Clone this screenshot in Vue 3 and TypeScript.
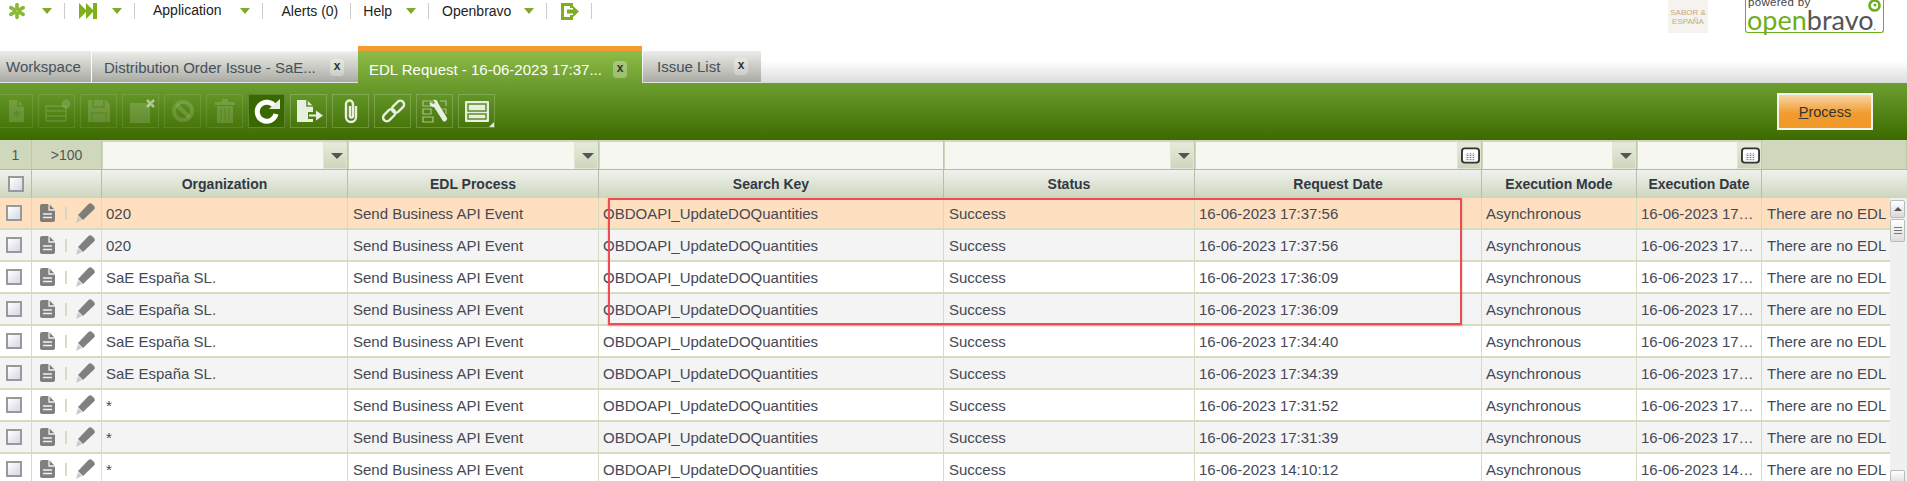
<script setup lang="ts">
interface Row { org: string; time: string; exec: string; }
const rows: Row[] = [
  { org: '020', time: '17:37:56', exec: '17' },
  { org: '020', time: '17:37:56', exec: '17' },
  { org: 'SaE España SL.', time: '17:36:09', exec: '17' },
  { org: 'SaE España SL.', time: '17:36:09', exec: '17' },
  { org: 'SaE España SL.', time: '17:34:40', exec: '17' },
  { org: 'SaE España SL.', time: '17:34:39', exec: '17' },
  { org: '*', time: '17:31:52', exec: '17' },
  { org: '*', time: '17:31:39', exec: '17' },
  { org: '*', time: '14:10:12', exec: '14' },
];
const headers = ['Organization', 'EDL Process', 'Search Key', 'Status', 'Request Date', 'Execution Mode', 'Execution Date', ''];
const filters = ['drop', 'drop', '', 'drop', 'cal', 'drop', 'cal'];
const tools = ['new', 'grid', 'save', 'del', 'stop', 'trash', 'refresh', 'export', 'clip', 'link', 'tools', 'view'];
const disabled = ['new', 'grid', 'save', 'del', 'stop', 'trash'];
</script>

<template>
  <div class="page">
    <header class="menu">
      <div class="seg s1">
        <svg width="18" height="18" viewBox="0 0 18 18"><g stroke="#8ab838" stroke-width="3.600" stroke-linecap="round"><path d="M9 2.500V7" /><path d="M9 11v4.500" /><path d="M2.800 5.600 6.800 7.800" /><path d="M11.200 10.200 15.200 12.400" /><path d="M2.800 12.400 6.800 10.200" /><path d="M11.200 7.800 15.200 5.600" /></g></svg>
        <i class="arrow"></i>
      </div>
      <div class="seg s2">
        <svg width="18" height="16" viewBox="0 0 18 16"><path fill="#7fb01c" d="M0 0 7 7V0l7 7V0h4v16h-4V9l-7 7V9l-7 7z" /></svg>
        <i class="arrow"></i>
      </div>
      <div class="seg s3"><span>Application</span><i class="arrow"></i></div>
      <div class="seg s4"><span>Alerts (0)</span></div>
      <div class="seg s5"><span>Help</span><i class="arrow"></i></div>
      <div class="seg s6"><span>Openbravo</span><i class="arrow"></i></div>
      <div class="seg s7">
        <svg width="18" height="17" viewBox="0 0 18 17"><path fill="#7fb01c" d="M0 0h12v5H9V3H3v11h6v-2h3v5H0z" /><path fill="#7fb01c" d="M6 6.500h6V3l6 5.500-6 5.500v-3.500H6z" /></svg>
      </div>
      <div class="logos">
        <div class="sabor"><span>SABOR &amp;</span><span>ESPAÑA</span></div>
        <div class="obox">
          <span class="powered">powered by</span>
          <span class="oname"><b>open</b>bravo<small>.</small></span>
          <svg class="swirl" width="13" height="13" viewBox="0 0 13 13"><circle cx="6.500" cy="6.500" r="5" fill="none" stroke="#6cae1c" stroke-width="2.600" /><circle cx="7" cy="6" r="1.500" fill="#6cae1c" /></svg>
        </div>
      </div>
    </header>

    <nav class="tabs">
      <div class="tab t-work">Workspace</div>
      <div class="tab t-dist"><span class="tlabel">Distribution Order Issue - SaE...</span><i class="close">x</i></div>
      <div class="tab t-edl"><span class="tlabel">EDL Request - 16-06-2023 17:37...</span><i class="close">x</i></div>
      <div class="tab t-issue"><span class="tlabel">Issue List</span><i class="close">x</i></div>
    </nav>

    <div class="bar">
      <div class="tools">
        <button v-for="t in tools" :key="t" class="tool" :class="[`tool-${t}`, { off: disabled.includes(t) }]">
          <svg width="30" height="28" viewBox="0 0 30 28">
            <template v-if="t === 'new'"><path d="M8 3h9l6 6v16H8z" /><path class="cut" d="M17 3v6h6" /><path class="cut" d="M15.500 13v7M12.500 15l6 3M18.500 15l-6 3" /></template>
            <template v-else-if="t === 'grid'"><path class="line" d="M4 9h18a2 2 0 0 1 2 2v11a2 2 0 0 1-2 2H6a2 2 0 0 1-2-2zM4 14h20M4 19h20" /><circle cx="24" cy="7" r="4.500" /></template>
            <template v-else-if="t === 'save'"><path d="M4 3h18l4 4v18H4z" /><path class="cut" d="M9 3v7h11V3M8 25v-9h14v9" /></template>
            <template v-else-if="t === 'del'"><rect x="4" y="6" width="20" height="20" /><path class="thick" d="M21 3l7 7M28 3l-7 7" /></template>
            <template v-else-if="t === 'stop'"><circle class="ring" cx="15" cy="14" r="9" /><path class="ring" d="M9 8l12 12" /></template>
            <template v-else-if="t === 'trash'"><path d="M5 5h20v3H5zM12 2h6v3h-6zM7 9h16v17H7z" /><path class="cut" d="M11 11v13M15 11v13M19 11v13" /></template>
            <template v-else-if="t === 'refresh'"><path class="ring heavy" d="M23 10a9.500 9.500 0 1 0 1 7" /><path d="M17 12h11V2z" /></template>
            <template v-else-if="t === 'export'"><path d="M3 3h10l6 6v6h-5v7h5v3H3z" /><path class="cut" d="M13 3v6h6" /><path d="M15 17.500h7v-4l7 5-7 5v-4h-7z" /></template>
            <template v-else-if="t === 'clip'"><path class="line bold" d="M20 9v11a5 5 0 0 1-10 0V7a3.500 3.500 0 0 1 7 0v12a1.500 1.500 0 0 1-3 0V9" /></template>
            <template v-else-if="t === 'link'"><rect class="line bold" x="4" y="14.500" width="14" height="7.500" rx="3.700" transform="rotate(-45 11 18)" /><rect class="line bold" x="13" y="6" width="14" height="7.500" rx="3.700" transform="rotate(-45 20 9.700)" /></template>
            <template v-else-if="t === 'tools'"><path class="line dim" d="M3 4h9v5H3zM3 12h8v5H3zM3 20h10v5H3zM20 4h6v5M22 12h4v5" /><path d="M13 3c2-1 5 0 5 3l9 15c1 2-3 5-4 3L14 10c-3 0-5-2-4-5l3 2 2-1z" /></template>
            <template v-else><rect x="3" y="4" width="24" height="21" rx="1" /><path class="cut" d="M6 7h18v7H6zM6 17h18v5H6z" /></template>
          </svg>
          <i v-if="t === 'view'" class="corner"></i>
        </button>
      </div>
      <button class="process"><u>P</u>rocess</button>
    </div>

    <div class="grid filter">
      <div class="fcell count">1</div>
      <div class="fcell count">&gt;100</div>
      <div v-for="(f, i) in filters" :key="i" class="fcell field">
        <div class="input"></div>
        <div v-if="f" class="fbtn">
          <i v-if="f === 'drop'" class="darrow"></i>
          <svg v-else width="20" height="17" viewBox="0 0 20 17"><rect x="1" y="1" width="18" height="15" rx="3" fill="#fff" stroke="#333" stroke-width="2" /><path d="M5 8h10M5 10.500h10M5 13h10M7 6v8M10 6v8M13 6v8" stroke="#777" stroke-dasharray="1 1" fill="none" /></svg>
        </div>
      </div>
      <div class="fcell"></div>
    </div>

    <div class="grid head">
      <div class="hcell"><span class="check"></span></div>
      <div class="hcell"></div>
      <div v-for="h in headers" :key="h" class="hcell">{{ h }}</div>
    </div>

    <div class="body">
      <div class="rows">
        <div v-for="(r, i) in rows" :key="i" class="grid row" :class="{ sel: i === 0, alt: i % 2 === 1 }">
          <div class="cell"><span class="check"></span></div>
          <div class="cell actions">
            <svg width="17" height="18" viewBox="0 0 17 18"><path fill="#6b6b6b" d="M1 2a2 2 0 0 1 2-2h7l6 6v10a2 2 0 0 1-2 2H3a2 2 0 0 1-2-2z" /><path stroke="#eee" stroke-width="1.300" fill="none" d="M10 0v6h6M4 10h9M4 13.500h9" /></svg>
            <i class="sep"></i>
            <svg width="20" height="20" viewBox="0 0 20 20"><path fill="#6b6b6b" d="M13.500 1c1-1 2.500-1 3.500 0l2 2c1 1 1 2.500 0 3.500L8 17 3 12z" /><path fill="#c4c4c4" d="M3 13l4 4-6 3z" /></svg>
          </div>
          <div class="cell">{{ r.org }}</div>
          <div class="cell wide">Send Business API Event</div>
          <div class="cell">OBDOAPI_UpdateDOQuantities</div>
          <div class="cell wide">Success</div>
          <div class="cell">16-06-2023 {{ r.time }}</div>
          <div class="cell">Asynchronous</div>
          <div class="cell">16-06-2023 {{ r.exec }}…</div>
          <div class="cell wide">There are no EDL</div>
        </div>
        <div class="highlight"></div>
      </div>
      <div class="scroll">
        <div class="sbtn up"><i></i></div>
        <div class="thumb"><i></i><i></i><i></i></div>
        <div class="sbtn down"></div>
      </div>
    </div>
  </div>
</template>

<style scoped>
.page { width: 1907px; height: 481px; overflow: hidden; background: #fff; font-family: "Liberation Sans", Arial, sans-serif; font-size: 15px; color: #444955; }
.menu { height: 46px; display: flex; align-items: flex-start; color: #222; font-size: 14px; }
.seg { height: 16px; margin-top: 3px; display: flex; align-items: center; border-right: 1px solid #ccc; padding-right: 12px; box-sizing: content-box; }
.s1 { padding-left: 8px; gap: 16px; width: 44px; }
.s2 { padding-left: 14px; gap: 15px; }
.s3 { padding-left: 18px; gap: 18px; }
.s3 span { position: relative; top: -1px; }
.s4 { padding-left: 19px; }
.s5 { padding-left: 12px; gap: 14px; }
.s6 { padding-left: 13px; gap: 13px; }
.s7 { padding-left: 14px; }
.arrow { width: 0; height: 0; border: 5.500px solid transparent; border-top: 6px solid #7fa92a; border-bottom: 0; }
.logos { margin-left: auto; display: flex; gap: 37px; padding-right: 23px; }
.sabor { width: 40px; height: 33px; background: #f5f3ef; color: #c9a872; font-size: 8px; line-height: 9px; display: flex; flex-direction: column; align-items: center; justify-content: center; }
.obox { position: relative; width: 137px; height: 32px; border: 1px solid #6cae1c; border-top: 0; border-radius: 0 0 3px 3px; box-sizing: content-box; }
.powered { display: block; margin: -4px 0 0 2px; font-size: 11.500px; line-height: 12px; color: #444; letter-spacing: .3px; }
.oname { display: block; margin-left: 1px; font-family: "Lato", sans-serif; font-size: 27px; line-height: 24px; color: #555; white-space: nowrap; }
.oname b { font-weight: 400; color: #6cae1c; }
.oname small { font-size: 10px; }
.swirl { position: absolute; right: 2px; top: -1px; }

.tabs { height: 37px; display: flex; align-items: flex-end; background: linear-gradient(#fff 40%, #dcdcdc 100%); font-size: 15px; }
.tab { height: 32px; box-sizing: border-box; display: flex; align-items: center; background: linear-gradient(#ecece8, #a9aba3); color: #46505a; white-space: nowrap; border-bottom: 1px solid #e4e4e4; }
.t-work { width: 92px; padding-left: 6px; border-right: 1px solid #fff; }
.t-dist { width: 266px; padding-left: 12px; justify-content: space-between; padding-right: 14px; border-top: 1px solid #f4f4f4; }
.t-edl { width: 284px; height: 37px; padding: 4px 15px 0 11px; justify-content: space-between; color: #fff; border-top: 5px solid #f39c32; border-bottom: 0; background: linear-gradient(#8fbc48, #6c9e30); }
.t-issue { width: 118px; margin-left: 1px; padding: 0 13px 0 14px; justify-content: space-between; }
.close { width: 14px; height: 17px; border-radius: 4px; background: rgba(255, 255, 255, .3); color: #333; font-style: normal; font-weight: 700; font-size: 12px; line-height: 14px; text-align: center; }

.bar { height: 57px; display: flex; align-items: flex-start; justify-content: space-between; background: linear-gradient(#6d9f30, #3c6a00); }
.tools { display: flex; gap: 5px; margin-top: 11px; }
.tool { position: relative; width: 37px; height: 34px; padding: 0; display: flex; align-items: center; justify-content: center; background: transparent; border: 1px solid rgba(255, 255, 255, .2); box-sizing: border-box; fill: #e8eee0; }
.tool.off { border-color: rgba(255, 255, 255, .1); fill: rgba(255, 255, 255, .15); }
.tool-new { width: 33px; border-left: 0; }
.tool-refresh { background: #3a6800; }
.tool svg { --cut: #5d8c26; }
.tool .cut { fill: none; stroke: var(--cut); stroke-width: 1.500; }
.tool .line { fill: none; stroke: #e8eee0; stroke-width: 1.500; }
.tool.off .line { stroke: rgba(255, 255, 255, .15); }
.tool .bold { stroke-width: 2.400; }
.tool .dim { stroke: #a9c48a; stroke-width: 1.200; }
.tool .ring { fill: none; stroke: currentColor; color: rgba(255, 255, 255, .15); stroke-width: 4; }
.tool .heavy { color: #fff; stroke-width: 5; }
.tool .thick { fill: none; stroke: rgba(255, 255, 255, .5); stroke-width: 2.500; }
.corner { position: absolute; right: 0; bottom: 0; width: 0; height: 0; border-style: solid; border-width: 0 0 5px 5px; border-color: transparent transparent #e6ece0 transparent; }
.process { margin: 10px 34px 0 0; width: 96px; height: 37px; border: 2px solid #f2f2ee; background: linear-gradient(#f9d5a8 0, #f19c30 55%, #f09828 100%); color: #333; font: 14.500px "Liberation Sans", Arial, sans-serif; padding: 0; }

.grid { display: grid; grid-template-columns: 32px 70px 246px 251px 345px 251px 287px 155px 125px 145px; }
.filter { height: 29px; background: #cfd8bd; color: #555; }
.fcell { border-right: 1px solid #bfc8ad; box-sizing: border-box; }
.count { display: flex; align-items: center; justify-content: center; font-size: 14px; }
.field { display: flex; padding: 2px 0 0 1px; }
.input { flex: 1; background: #f5f7f0; }
.fbtn { width: 24px; padding-left: 3px; display: flex; align-items: center; justify-content: center; background: linear-gradient(#e6ebdb, #cdd6bd); border: 1px solid #e0e6d2; box-sizing: border-box; }
.darrow { width: 0; height: 0; border: 6px solid transparent; border-top: 6px solid #555; border-bottom: 0; }
.head { height: 29px; background: linear-gradient(#f0f2ed, #ccd6bd); border-top: 1px solid #b4b8ac; box-sizing: border-box; font-weight: 700; color: #333844; }
.hcell { display: flex; align-items: center; justify-content: center; border-right: 1px solid #b8bdae; box-sizing: border-box; font-size: 14px; }
.hcell:last-child { border-right: 0; }

.body { display: flex; height: 288px; }
.rows { position: relative; width: 1890px; flex: none; }
.row { height: 32px; grid-template-columns: 32px 70px 246px 251px 345px 251px 287px 155px 125px 128px; background: #fff; border-bottom: 2px solid #d4dcc2; box-sizing: border-box; }
.row.alt { background: #f4f4f4; }
.row.sel { background: #fedfbf; }
.cell { display: flex; align-items: center; padding-left: 4px; border-right: 1px solid #d4dcc2; box-sizing: border-box; white-space: nowrap; overflow: hidden; }
.cell.wide { padding-left: 5px; }
.cell:last-child { border-right: 0; }
.check { display: block; width: 16px; height: 16px; box-sizing: border-box; border: 2px solid #999; background: linear-gradient(135deg, #fff, #d5d8e6); }
.cell .check { margin-left: 2px; }
.actions { padding-left: 7px; gap: 0; opacity: .85; }
.sep { width: 2px; height: 13px; margin: 0 8px 0 9px; background: #cfd8bd; }
.highlight { position: absolute; left: 608px; top: 0; width: 854px; height: 127px; box-sizing: border-box; border: 2px solid #ef4b50; box-shadow: 0 1px 2px rgba(0, 0, 0, .25); }

.scroll { flex: 1; background: #f0f0f0; display: flex; flex-direction: column; padding-top: 2px; box-sizing: border-box; }
.sbtn { width: 15px; box-sizing: border-box; background: linear-gradient(#fff, #d8d8d8); border: 1px solid #bbb; border-radius: 2px; display: flex; justify-content: center; }
.up { height: 18px; align-items: center; }
.up i { width: 0; height: 0; border: 4px solid transparent; border-bottom: 4px solid #555; border-top: 0; }
.thumb { width: 15px; height: 23px; margin-top: 1px; box-sizing: border-box; background: linear-gradient(#fff, #ddd); border: 1px solid #bbb; border-radius: 2px; display: flex; flex-direction: column; align-items: center; justify-content: center; gap: 2px; }
.thumb i { width: 8px; height: 1px; background: #777; }
.down { height: 16px; margin-top: auto; }
</style>

<style>
html, body { margin: 0; overflow: hidden; }
</style>
